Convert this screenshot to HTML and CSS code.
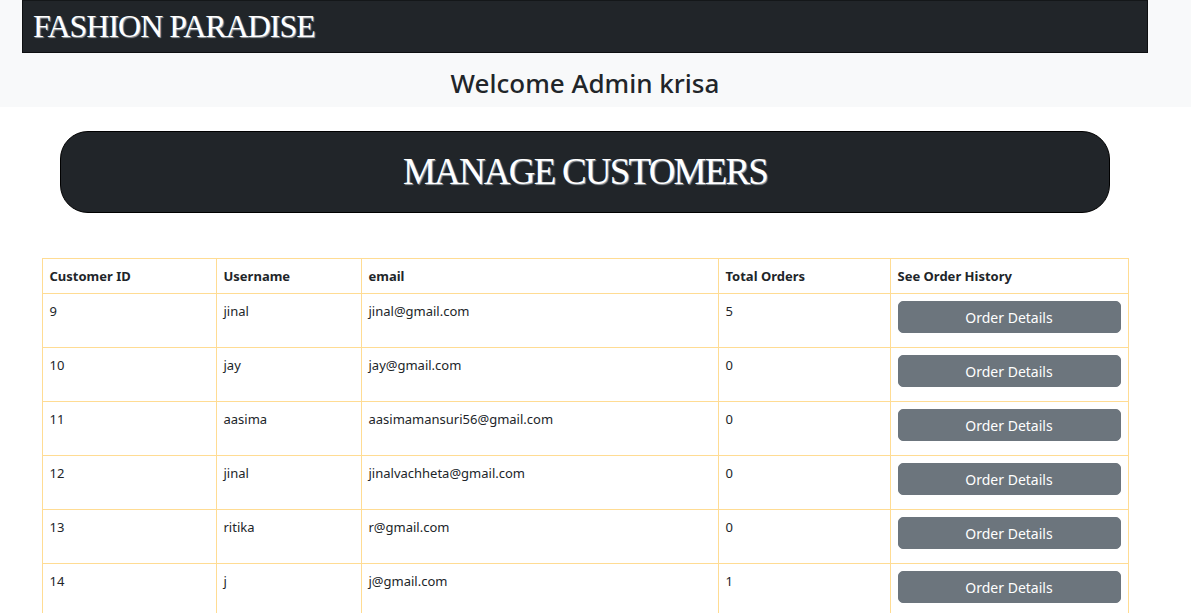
FILE: index.html
```html
<!DOCTYPE html>
<html lang="en">
<head>
<meta charset="utf-8">
<title>Manage Customers</title>
<link rel="stylesheet" href="styles.css">
</head>
<body>
<header class="top">
  <div class="wrap">
    <nav class="navbar"><span class="brand">FASHION PARADISE</span></nav>
    <h2 class="welcome">Welcome Admin krisa</h2>
  </div>
</header>
<main class="wrap">
  <div class="banner"><h1 class="banner-title">MANAGE CUSTOMERS</h1></div>
  <table class="customers">
    <thead>
      <tr>
        <th class="c-id">Customer ID</th>
        <th class="c-user">Username</th>
        <th class="c-email">email</th>
        <th class="c-orders">Total Orders</th>
        <th class="c-hist">See Order History</th>
      </tr>
    </thead>
    <tbody>
      <tr><td>9</td><td>jinal</td><td>jinal@gmail.com</td><td>5</td><td><button class="btn">Order Details</button></td></tr>
      <tr><td>10</td><td>jay</td><td>jay@gmail.com</td><td>0</td><td><button class="btn">Order Details</button></td></tr>
      <tr><td>11</td><td>aasima</td><td>aasimamansuri56@gmail.com</td><td>0</td><td><button class="btn">Order Details</button></td></tr>
      <tr><td>12</td><td>jinal</td><td>jinalvachheta@gmail.com</td><td>0</td><td><button class="btn">Order Details</button></td></tr>
      <tr><td>13</td><td>ritika</td><td>r@gmail.com</td><td>0</td><td><button class="btn">Order Details</button></td></tr>
      <tr><td>14</td><td>j</td><td>j@gmail.com</td><td>1</td><td><button class="btn">Order Details</button></td></tr>
    </tbody>
  </table>
</main>
</body>
</html>
```
FILE: styles.css
```css
html, body {
  margin: 0;
  padding: 0;
  background: #ffffff;
  color: #212529;
  font-family: "Noto Sans", "Open Sans", sans-serif;
}
.top {
  background: #f8f9fa;
  height: 107px;
}
.wrap {
  width: 1170px;
}
.navbar {
  margin: 0 auto;
  width: 1114px;
  height: 51px;
  background: #212529;
  border: 1px solid #0d0f11;
  border-top-color: #141719;
  display: flex;
  align-items: center;
  padding-left: 10px;
  box-sizing: content-box;
}
.brand {
  font-family: "Liberation Serif", "DejaVu Serif", serif;
  font-size: 32px;
  color: #ffffff;
  text-shadow: 1px 1px 1px #9aa0a6;
  letter-spacing: -1px;
}
.welcome {
  margin: 0;
  padding-top: 7px;
  text-align: center;
  font-size: 26px;
  font-weight: 500;
  line-height: 47px;
  color: #212529;
}
.banner {
  margin: 24px auto 0;
  width: 1048px;
  height: 80px;
  background: #212529;
  border: 1px solid #000;
  border-radius: 28px;
  display: flex;
  align-items: center;
  justify-content: center;
}
.banner-title {
  margin: 0;
  font-family: "Liberation Serif", "DejaVu Serif", serif;
  font-weight: 400;
  font-size: 37px;
  color: #ffffff;
  text-shadow: 1px 1px 1px #9aa0a6;
  letter-spacing: -1.8px;
  padding-bottom: 2px;
}
.customers {
  margin: 45px auto 0;
  width: 1086px;
  border-collapse: collapse;
  table-layout: fixed;
  font-size: 13px;
}
.customers th,
.customers td {
  border: 1px solid #ffdc93;
  padding: 7px 7px;
  text-align: left;
  vertical-align: top;
  line-height: 20px;
}
.customers th {
  font-weight: 700;
  height: 20px;
}
.customers td {
  height: 39px;
}
.c-id { width: 159px; }
.c-user { width: 130px; }
.c-email { width: 342px; }
.c-orders { width: 157px; }
.c-hist { width: 223px; }
.btn {
  display: block;
  width: 100%;
  height: 32px;
  background: #6c757d;
  border: 1px solid #6c757d;
  border-radius: 5px;
  color: #ffffff;
  font-family: "Noto Sans", "Open Sans", sans-serif;
  font-size: 14px;
  padding: 0;
}
```
